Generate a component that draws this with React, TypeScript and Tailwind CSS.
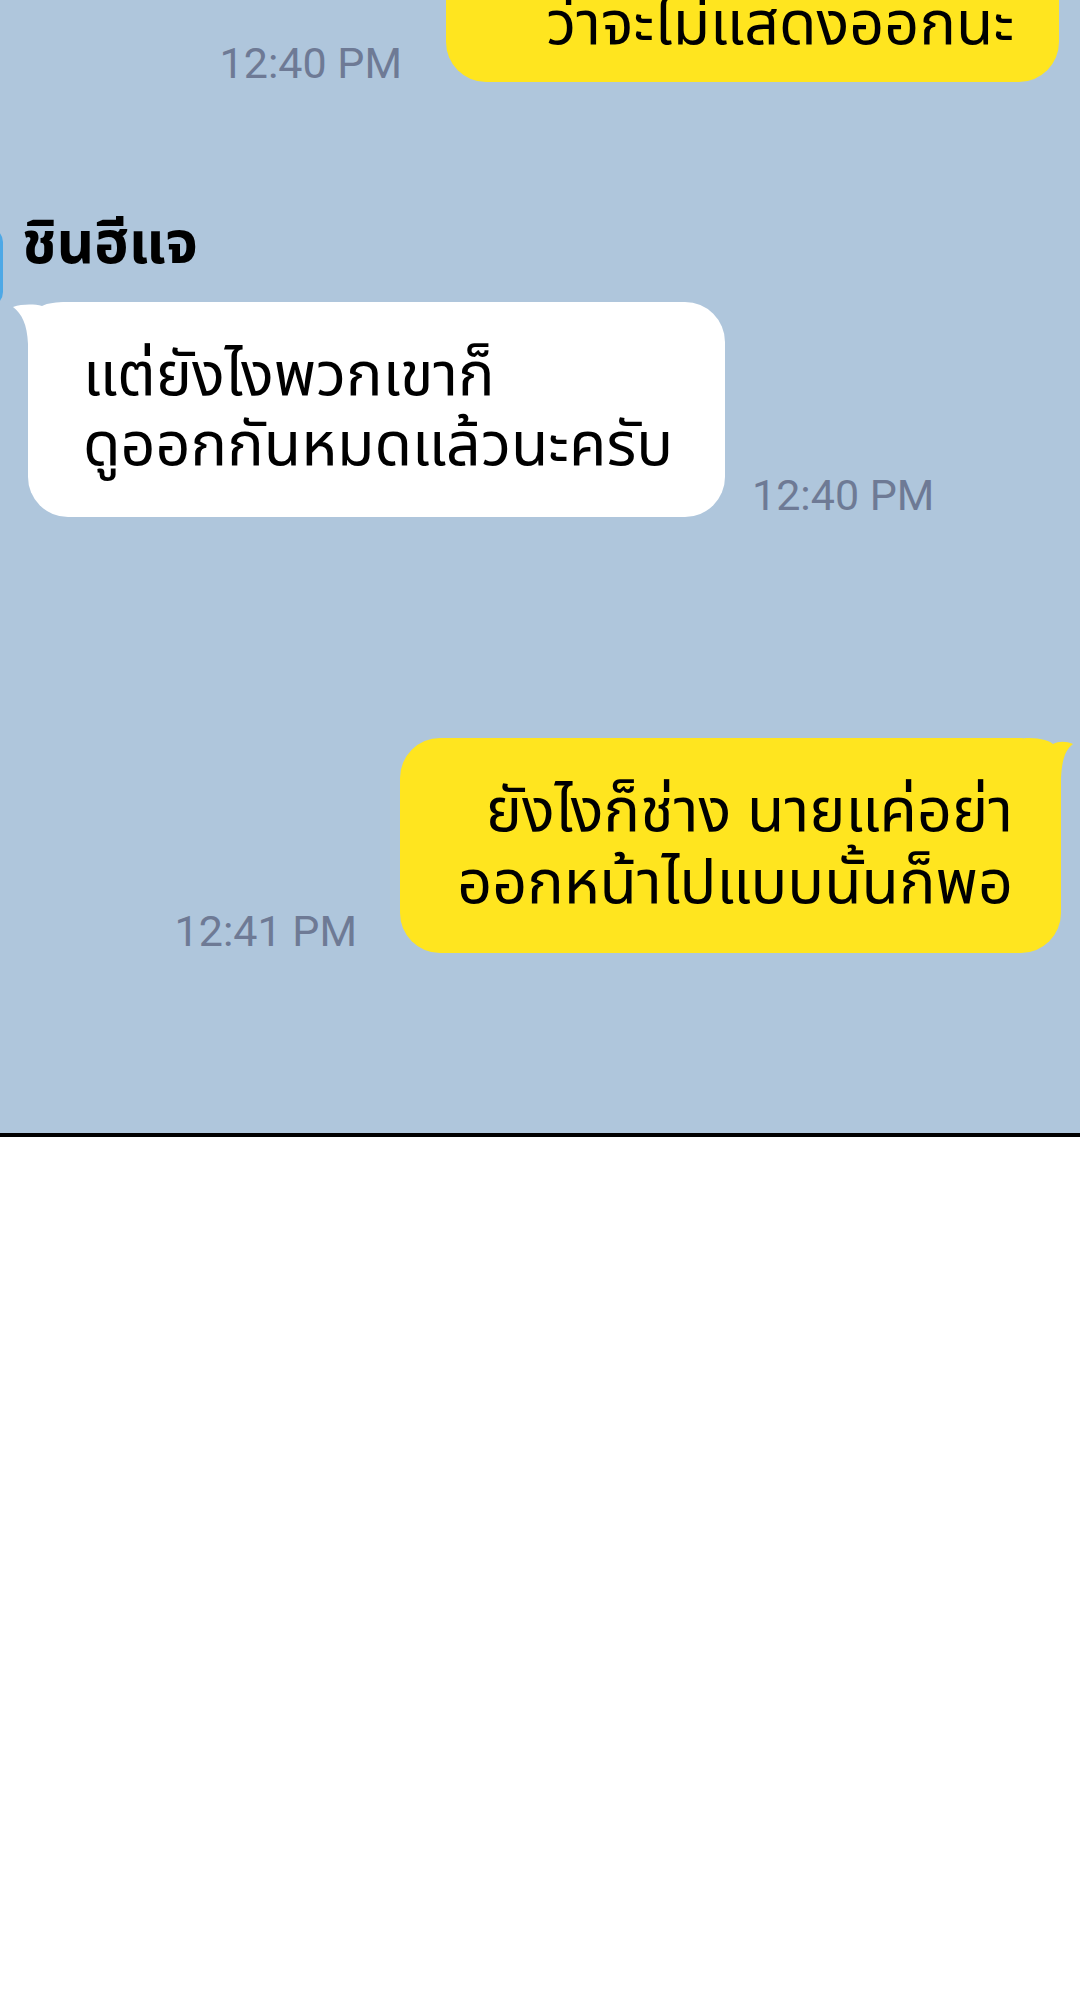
import React from 'react';

const thai = { fontFamily: '"Noto Sans Thai", "Noto Sans", "DejaVu Sans", sans-serif' };
const clock = { fontFamily: 'Roboto, "Liberation Sans", sans-serif' };

const Time = ({ t, className = '' }: { t: string; className?: string }) => (
  <div className={`text-[43px] leading-none text-[#6e7a95] ${className}`} style={clock}>
    {t}
  </div>
);

const WhiteTail = () => (
  <svg className="absolute left-[-16px] top-0" width="56" height="50" viewBox="0 0 56 50">
    <path d="M1 5 C10 2 22 2 30 4 C36 1 44 0 56 0 L56 50 L16 50 L16 42 C15 22 10 12 1 5 Z" fill="#ffffff" />
  </svg>
);

const YellowTail = () => (
  <svg className="absolute right-[-14px] top-0" width="50" height="50" viewBox="0 0 50 50">
    <path d="M48 6 C41 3 34 3 28 6 C22 1 12 0 0 0 L0 50 L36 50 L36 40 C37 22 40 12 48 6 Z" fill="#ffe51f" />
  </svg>
);

export default function App() {
  return (
    <div className="min-h-[2000px] bg-white" style={thai}>
      <div className="relative flex h-[1133px] flex-col overflow-hidden bg-[#afc6dc]">
        {/* last message from previous page, cut at top */}
        <div className="flex items-end justify-end pr-[21px]">
          <Time t="12:40 PM" className="mb-[-3px] mr-[44px]" />
          <div className="mt-[-11px] w-[613px] rounded-b-[40px] bg-[#ffe51f] pb-[21px] pr-[45px] text-right text-[61px] leading-[72px] text-black">
            ว่าจะไม่แสดงออกนะ
          </div>
        </div>

        {/* friend name */}
        <div className="relative mt-[133px] pl-[22px]">
          <div className="absolute left-[-40px] top-[13px] h-[78px] w-[43px] rounded-[14px] bg-[#4da8e6]" />
          <div className="text-[58px] font-bold leading-[60px] text-black">ชินฮีแจ</div>
        </div>

        {/* incoming */}
        <div className="mt-[27px] flex items-end pl-[28px]">
          <div className="relative w-[697px] rounded-[40px] bg-white pb-[36px] pl-[55px] pt-[39px] text-[61px] leading-[70px] text-black">
            <WhiteTail />
            <div className="relative">แต่ยังไงพวกเขาก็</div>
            <div className="relative">ดูออกกันหมดแล้วนะครับ</div>
          </div>
          <Time t="12:40 PM" className="ml-[27px]" />
        </div>

        {/* outgoing */}
        <div className="mt-[221px] flex items-end justify-end pr-[19px]">
          <Time t="12:41 PM" className="mr-[43px]" />
          <div className="relative w-[661px] rounded-[40px] bg-[#ffe51f] pb-[33px] pr-[48px] pt-[38px] text-right text-[61px] leading-[72px] text-black">
            <YellowTail />
            <div className="relative">ยังไงก็ช่าง นายแค่อย่า</div>
            <div className="relative">ออกหน้าไปแบบนั้นก็พอ</div>
          </div>
        </div>
      </div>
      <div className="h-[4px] bg-black" />
    </div>
  );
}
